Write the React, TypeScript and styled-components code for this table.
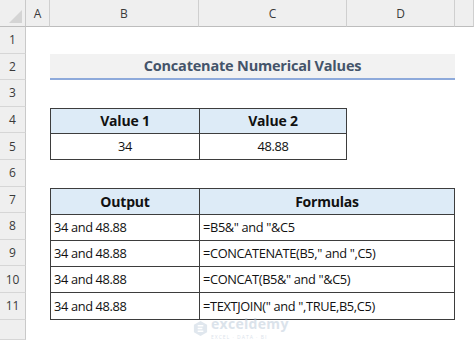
import React from 'react';
import styled, { createGlobalStyle } from 'styled-components';

const GlobalStyle = createGlobalStyle`
  html, body {
    margin: 0;
    padding: 0;
    background: #ffffff;
  }
  body {
    font-family: "Open Sans", sans-serif;
  }
`;

const ROW_H = 26.6;

const Sheet = styled.div`
  position: relative;
  width: 474px;
  height: 340px;
  overflow: hidden;
  display: grid;
  grid-template-columns: 26px 24px 149px 148px 108px 1fr;
  grid-template-rows: 27px repeat(11, ${ROW_H}px) 1fr;
  background: #ffffff;
  color: #111;
`;

const Corner = styled.div`
  grid-row: 1;
  grid-column: 1;
  background: #efefef;
  border-right: 1px solid #c9c9c9;
  border-bottom: 1px solid #bdbdbd;
  position: relative;
  &::after {
    content: '';
    position: absolute;
    right: 3px;
    bottom: 3px;
    width: 0;
    height: 0;
    border-left: 13px solid transparent;
    border-bottom: 13px solid #d4d4d4;
  }
`;

const ColHead = styled.div<{ $col: number }>`
  grid-row: 1;
  grid-column: ${(p) => p.$col};
  background: #efefef;
  border-right: 1px solid #cfcfcf;
  border-bottom: 1px solid #bdbdbd;
  display: flex;
  align-items: center;
  justify-content: center;
  font-size: 12px;
  color: #3a3a3a;
`;

const RowHead = styled.div<{ $row: number }>`
  grid-row: ${(p) => p.$row};
  grid-column: 1;
  background: #efefef;
  border-right: 1px solid #c9c9c9;
  border-bottom: 1px solid #d6d6d6;
  display: flex;
  align-items: center;
  justify-content: center;
  font-size: 12px;
  color: #3a3a3a;
`;

const Title = styled.div`
  grid-row: 3;
  grid-column: 3 / 6;
  background: #f2f2f2;
  border-bottom: 2px solid #8eaadb;
  display: flex;
  align-items: center;
  justify-content: center;
  font-weight: bold;
  font-size: 14.5px;
  letter-spacing: -0.2px;
  color: #44546a;
`;

const Table = styled.div<{ $rows: string; $cols: string; $gridRow: string; $gridCol: string }>`
  position: relative;
  grid-row: ${(p) => p.$gridRow};
  grid-column: ${(p) => p.$gridCol};
  display: grid;
  grid-template-columns: ${(p) => p.$cols};
  grid-template-rows: ${(p) => p.$rows};
  border: 1px solid #3d3d3d;
  margin-top: 1px;
`;

const Cell = styled.div<{ $head?: boolean; $center?: boolean; $last?: boolean; $bottom?: boolean }>`
  display: flex;
  align-items: center;
  justify-content: ${(p) => (p.$center ? 'center' : 'flex-start')};
  padding: 0 3px;
  font-size: ${(p) => (p.$head ? '14px' : '12.8px')};
  letter-spacing: ${(p) => (p.$head ? '-0.2px' : '-0.35px')};
  font-weight: ${(p) => (p.$head ? 'bold' : 'normal')};
  background: ${(p) => (p.$head ? '#ddebf7' : '#ffffff')};
  border-right: ${(p) => (p.$last ? 'none' : '1px solid #3d3d3d')};
  border-bottom: ${(p) => (p.$bottom ? 'none' : '1px solid #3d3d3d')};
  white-space: nowrap;
  overflow: hidden;
`;

const Watermark = styled.div`
  position: absolute;
  left: 142px;
  bottom: -21px;
  display: flex;
  align-items: center;
  gap: 3px;
  opacity: 0.5;
  pointer-events: none;
`;

const WatermarkText = styled.div`
  display: flex;
  flex-direction: column;
  line-height: 1;
`;

const WatermarkName = styled.span`
  font-weight: bold;
  font-size: 14px;
  line-height: 14px;
  color: #b9c8d8;
  letter-spacing: 0.3px;
`;

const WatermarkSub = styled.span`
  font-size: 5px;
  line-height: 5px;
  color: #b9c8d8;
  letter-spacing: 1px;
  margin-top: 4px;
`;

const columns = [
  { col: 2, label: 'A' },
  { col: 3, label: 'B' },
  { col: 4, label: 'C' },
  { col: 5, label: 'D' },
  { col: 6, label: '' },
];

const outputs = [
  { out: '34 and 48.88', formula: '=B5&" and "&C5' },
  { out: '34 and 48.88', formula: '=CONCATENATE(B5," and ",C5)' },
  { out: '34 and 48.88', formula: '=CONCAT(B5&" and "&C5)' },
  { out: '34 and 48.88', formula: '=TEXTJOIN(" and ",TRUE,B5,C5)' },
];

export default function App(): JSX.Element {
  const rows = Array.from({ length: 12 }, (_, i) => i + 1);

  return (
    <>
      <GlobalStyle />
      <Sheet>
        <Corner />
        {columns.map((c) => (
          <ColHead key={c.col} $col={c.col}>{c.label}</ColHead>
        ))}
        {rows.map((r) => (
          <RowHead key={r} $row={r + 1}>{r <= 11 ? r : ''}</RowHead>
        ))}

        <Title>Concatenate Numerical Values</Title>

        <Table $gridRow={'5 / 7'} $gridCol={'3 / 5'} $cols={'149px 1fr'} $rows={'1fr 1fr'}>
          <Cell $head $center>Value 1</Cell>
          <Cell $head $center $last>Value 2</Cell>
          <Cell $center $bottom>34</Cell>
          <Cell $center $bottom $last>48.88</Cell>
        </Table>

        <Table $gridRow={'8 / 13'} $gridCol={'3 / 6'} $cols={'149px 1fr'} $rows={'repeat(5, 1fr)'}>
          <Cell $head $center>Output</Cell>
          <Cell $head $center $last>Formulas</Cell>
          {outputs.map((o, i) => (
            <React.Fragment key={i}>
              <Cell $bottom={i === outputs.length - 1}>{o.out}</Cell>
              <Cell $last $bottom={i === outputs.length - 1}>{o.formula}</Cell>
            </React.Fragment>
          ))}
          <Watermark>
            <svg width="15" height="17" viewBox="0 0 16 18">
              <path d="M8 1 L15 5 L15 13 L8 17 L1 13 L1 5 Z" fill="#c3d0de" />
              <path d="M5 6 L11 6 M5 9 L10 9 M5 12 L11 12" stroke="#ffffff" strokeWidth="1.5" />
            </svg>
            <WatermarkText>
              <WatermarkName>exceldemy</WatermarkName>
              <WatermarkSub>EXCEL · DATA · BI</WatermarkSub>
            </WatermarkText>
          </Watermark>
        </Table>
      </Sheet>
    </>
  );
}
